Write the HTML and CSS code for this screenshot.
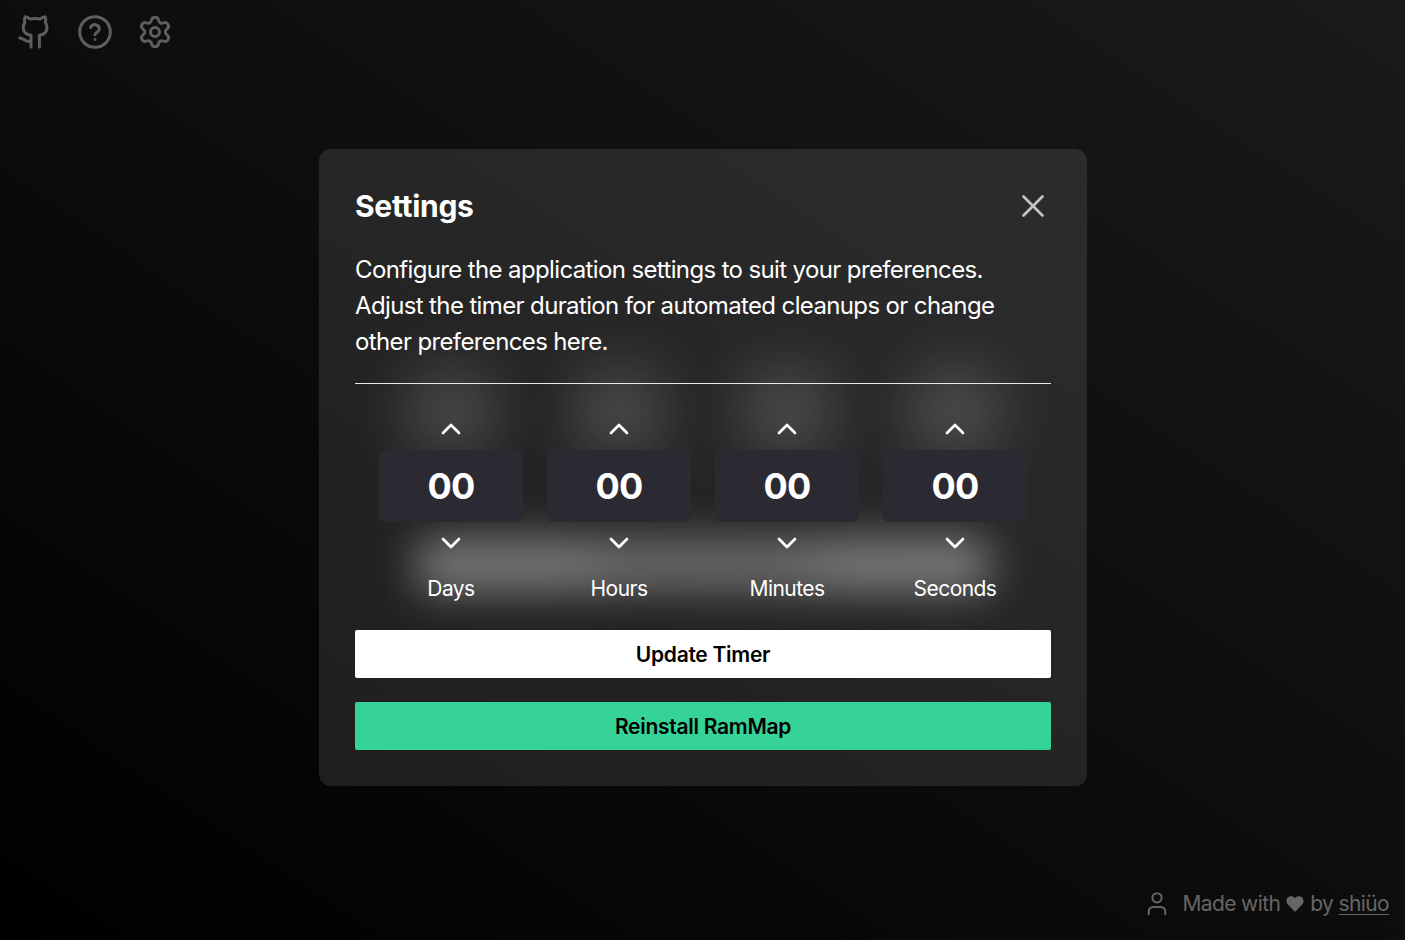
FILE: index.html
```html
<!DOCTYPE html>
<html lang="en">
<head>
<meta charset="utf-8">
<title>Settings</title>
<link rel="stylesheet" href="styles.css">
</head>
<body>
<div class="app">
  <nav class="toolbar">
    <svg class="icon" viewBox="0 0 36 36"><path d="M14 33V21.300C9 20.500 6.200 18 6.200 13.500C6.200 11.500 6.800 9.800 7.900 8.600C7.300 6.500 7.400 4.500 8.100 2.800C10 2.900 11.500 3.800 12.800 4.900C16 4.500 20.200 4.500 23.400 4.900C24.700 3.800 26.200 2.900 28.100 2.800C28.800 4.500 28.900 6.500 28.300 8.600C29.400 9.800 30 11.500 30 13.500C30 18 27.200 20.500 22.400 21.300V33M14 27.500C8.500 28.500 7 24.200 2.800 23.900"/></svg>
    <svg class="icon" viewBox="0 0 24 24"><circle cx="12" cy="12" r="10.200"/><path d="M9.100 9a3 3 0 0 1 5.800 1c0 2-2.900 2.200-2.900 3.800M12 17h.01"/></svg>
    <svg class="icon" viewBox="0 0 24 24"><circle cx="12" cy="12" r="3"/><path d="M9.700 4.100a2.340 2.340 0 0 1 4.600 0 2.340 2.340 0 0 0 3.300 1.900 2.340 2.340 0 0 1 2.400 4 2.340 2.340 0 0 0 0 4 2.340 2.340 0 0 1-2.400 4 2.340 2.340 0 0 0-3.300 1.900 2.340 2.340 0 0 1-4.600 0 2.340 2.340 0 0 0-3.300-1.900 2.340 2.340 0 0 1-2.400-4 2.340 2.340 0 0 0 0-4 2.340 2.340 0 0 1 2.400-4 2.340 2.340 0 0 0 3.300-1.900"/></svg>
  </nav>
  <main class="stage">
    <section class="dialog">
      <div class="glow">
        <i class="spot"></i><i class="spot"></i><i class="spot"></i><i class="spot"></i>
        <i class="beam"></i>
      </div>
      <header class="heading"><h1>Settings</h1><svg class="close" viewBox="0 0 36 36"><path d="M8.500 8.500l19 19M27.500 8.500l-19 19"/></svg></header>
      <p class="intro">Configure the application settings to suit your preferences. Adjust the timer duration for automated cleanups or change other preferences here.</p>
      <div class="timer">
        <div class="unit"><svg class="chevron" viewBox="0 0 24 24"><path d="M4 16l8-8 8 8"/></svg><div class="value">00</div><svg class="chevron" viewBox="0 0 24 24"><path d="M4 8l8 8 8-8"/></svg><span class="label">Days</span></div>
        <div class="unit"><svg class="chevron" viewBox="0 0 24 24"><path d="M4 16l8-8 8 8"/></svg><div class="value">00</div><svg class="chevron" viewBox="0 0 24 24"><path d="M4 8l8 8 8-8"/></svg><span class="label">Hours</span></div>
        <div class="unit"><svg class="chevron" viewBox="0 0 24 24"><path d="M4 16l8-8 8 8"/></svg><div class="value">00</div><svg class="chevron" viewBox="0 0 24 24"><path d="M4 8l8 8 8-8"/></svg><span class="label">Minutes</span></div>
        <div class="unit"><svg class="chevron" viewBox="0 0 24 24"><path d="M4 16l8-8 8 8"/></svg><div class="value">00</div><svg class="chevron" viewBox="0 0 24 24"><path d="M4 8l8 8 8-8"/></svg><span class="label">Seconds</span></div>
      </div>
      <button class="button">Update Timer</button>
      <button class="button accent">Reinstall RamMap</button>
    </section>
  </main>
  <footer class="credit">
    <svg class="person" viewBox="0 0 24 24"><circle cx="12" cy="5.800" r="4.600"/><path d="M3.700 22.200v-2.700a4.500 4.500 0 0 1 4.500-4.500h7.600a4.500 4.500 0 0 1 4.500 4.500v2.700"/></svg>
    <span>Made with</span>
    <svg class="heart" viewBox="0 0 18 18"><path d="M9 17L1.900 9.600C-.6 7 .3 2.500 3.500 1.400C5.600.7 7.700 1.400 9 3.100C10.300 1.400 12.400.7 14.500 1.400C17.700 2.500 18.600 7 16.100 9.600Z"/></svg>
    <span>by <a class="author">shiüo</a></span>
  </footer>
</div>
</body>
</html>
```
FILE: styles.css
```css
* { box-sizing: border-box; }
body { margin: 0; font-family: Inter, sans-serif; color: #fff; }
.app { position: relative; height: 940px; overflow: hidden; background: linear-gradient(to top right, #000, #1a1a1a); }
svg { fill: none; stroke: currentColor; stroke-linecap: round; stroke-linejoin: round; display: block; }
.toolbar { position: absolute; top: 14px; left: 17px; display: flex; gap: 24px; color: #5e5e5e; }
.icon { width: 36px; height: 36px; stroke-width: 2; }
.icon:first-child { stroke-width: 3; }
.stage { height: 100%; padding: 149px 318px 0 319px; }
.dialog { position: relative; width: 768px; height: 637px; padding: 36px; border-radius: 12px; background: rgba(255,255,255,.103); overflow: hidden; }
.heading, .intro, .timer, .button { position: relative; }
.heading { display: flex; justify-content: space-between; align-items: center; height: 42px; }
h1 { margin: 0; font-size: 30px; line-height: 42px; font-weight: 700; letter-spacing: -.3px; }
.close { width: 36px; height: 36px; stroke: #c4c4c4; stroke-width: 2.700; }
.intro { margin: 25px 0 0; font-size: 24px; line-height: 36px; letter-spacing: -.63px; }
.timer { display: flex; justify-content: center; gap: 24px; height: 247px; margin-top: 23px; padding-top: 33px; border-top: 1px solid #e8e8e8; }
.unit { width: 144px; display: flex; flex-direction: column; align-items: center; }
.chevron { width: 24px; height: 24px; stroke-width: 2.700; }
.value { width: 144px; height: 72px; margin: 9px 0; border-radius: 6px; background: #2b2932; font-size: 36px; line-height: 72px; font-weight: 700; letter-spacing: -.8px; text-align: center; }
.label { margin-top: 19px; font-size: 21px; line-height: 30px; letter-spacing: -.55px; }
.button { display: block; width: 100%; height: 48px; border: 0; border-radius: 2px; background: #fff; color: #000; font: 600 21px/48px Inter, sans-serif; letter-spacing: -.28px; }
.accent { margin-top: 24px; background: #36d399; }
.glow { position: absolute; inset: 0; }
.spot { position: absolute; top: 220px; left: 87px; width: 90px; height: 86px; border-radius: 24px; background: rgba(255,255,255,.17); filter: blur(28px); }
.spot:nth-child(2) { left: 255px; }
.spot:nth-child(3) { left: 423px; }
.spot:nth-child(4) { left: 591px; }
.beam { position: absolute; top: 388px; left: 98px; width: 572px; height: 56px; background: linear-gradient(90deg, rgba(255,255,255,.38) 25%, rgba(255,255,255,.31) 38% 64%, rgba(255,255,255,.38) 75%); filter: blur(21px); }
.credit { position: absolute; right: 16px; bottom: 18px; display: flex; align-items: center; height: 36px; font-size: 21px; line-height: 36px; letter-spacing: -.62px; color: #666; }
.person { width: 24px; height: 24px; margin-right: 13px; stroke-width: 2; }
.heart { width: 18px; height: 18px; margin: 0 6px; fill: currentColor; stroke: none; }
.author { display: inline-block; height: 24px; line-height: 26px; border-bottom: 1px solid #666; }
```
